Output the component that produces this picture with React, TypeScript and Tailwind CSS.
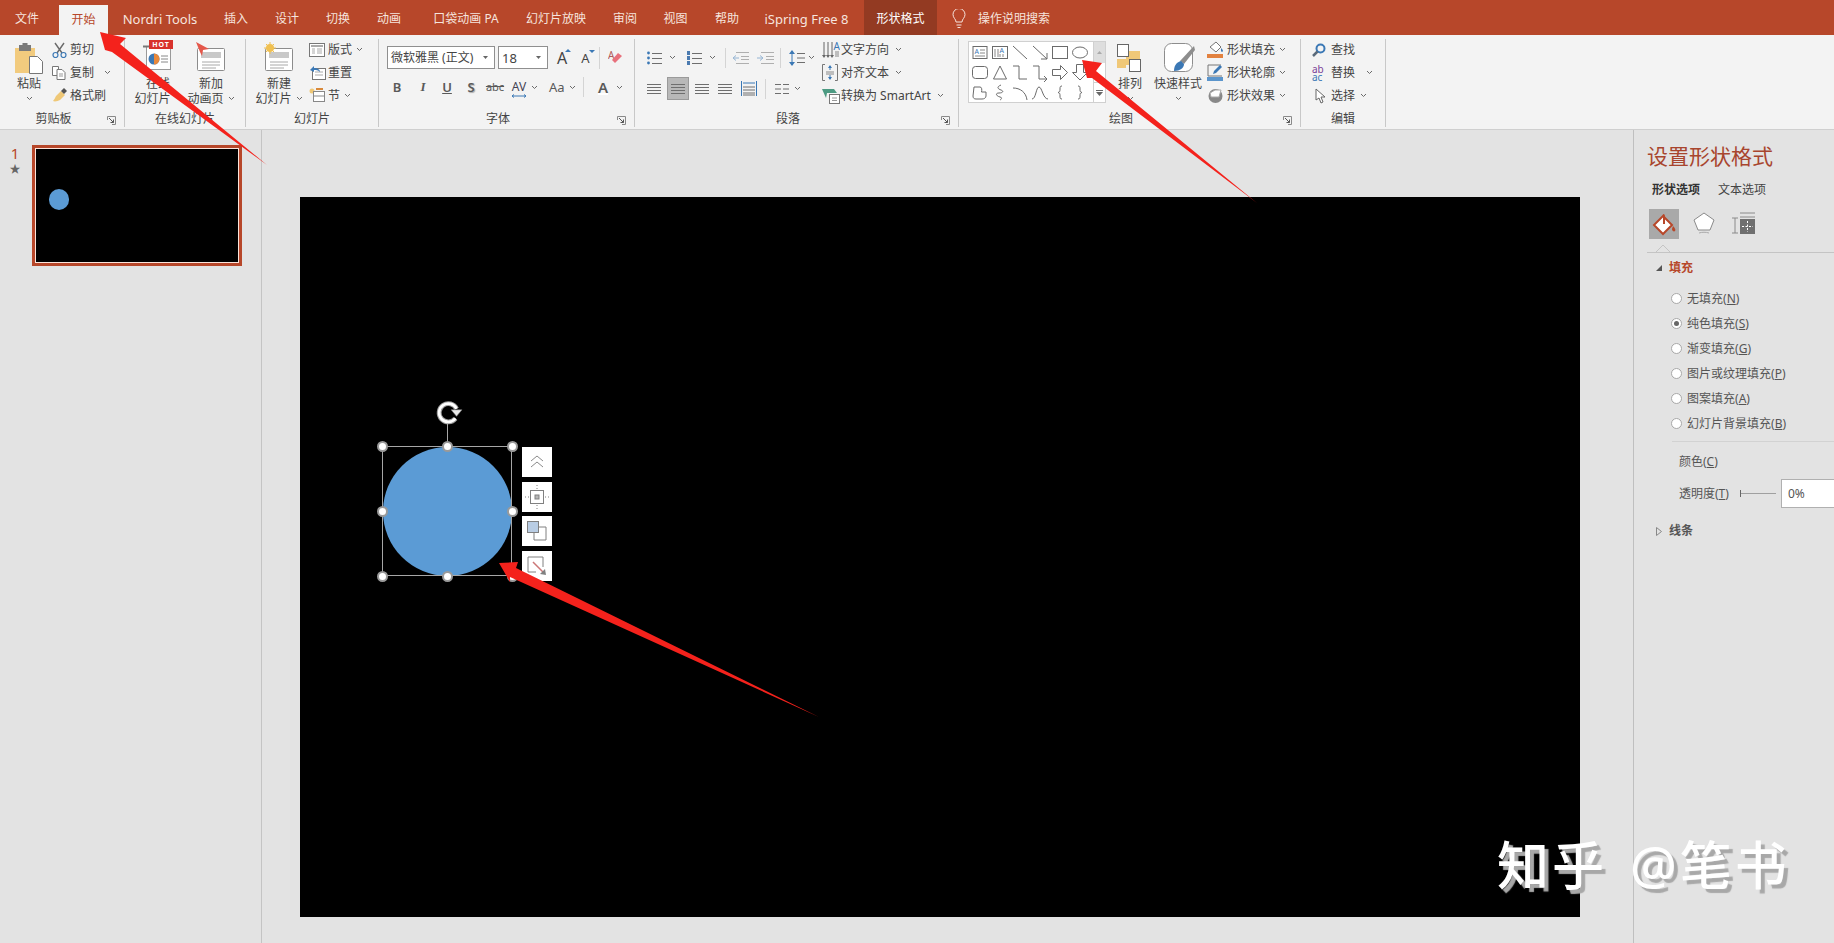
import React from 'react';

const FONT = '[font-family:"Noto_Sans","Noto_Sans_CJK_SC",sans-serif]';

const tabs = [
  { label: '插入', w: 'w-[48px]' },
  { label: '设计', w: 'w-[54px]' },
  { label: '切换', w: 'w-[48px]' },
  { label: '动画', w: 'w-[54px]' },
  { label: '口袋动画 PA', w: 'w-[100px]' },
  { label: '幻灯片放映', w: 'w-[80px]' },
  { label: '审阅', w: 'w-[58px]' },
  { label: '视图', w: 'w-[43px]' },
  { label: '帮助', w: 'w-[60px]' },
];

const fillOptions = ['无填充(N)', '纯色填充(S)', '渐变填充(G)', '图片或纹理填充(P)', '图案填充(A)', '幻灯片背景填充(B)'];

function Chevron({ className = '' }: { className?: string }) {
  return (
    <svg width="7" height="5" viewBox="0 0 7 5" className={`shrink-0 ${className}`}>
      <path d="M1 1l2.5 2.5L6 1" fill="none" stroke="#6a6a6a" strokeWidth="1" />
    </svg>
  );
}

function Launcher() {
  return (
    <svg width="9" height="9" viewBox="0 0 9 9">
      <path d="M.5 4V.5H8.5V8.5H5" fill="none" stroke="#8a8a8a" />
      <path d="M2 2l4.5 4.5M6.5 3.5v3h-3" fill="none" stroke="#555" />
    </svg>
  );
}

function Group({ width, label, launcher, children }: { width: string; label: string; launcher?: boolean; children: React.ReactNode }) {
  return (
    <div className={`flex flex-col shrink-0 ${width}`}>
      <div className="flex h-[70px]">{children}</div>
      <div className="flex h-[22px] items-center pt-[2px]">
        <span className="flex-1 text-center">{label}</span>
        {launcher && (
          <span className="flex w-[17px] pt-[3px]">
            <Launcher />
          </span>
        )}
      </div>
    </div>
  );
}

function Sep() {
  return <div className="mt-[1px] h-[88px] w-px shrink-0 bg-[#c8c8c8]" />;
}

function SmallRow({ icon, slot, label, chevron }: { icon: React.ReactNode; slot: string; label: string; chevron?: string }) {
  return (
    <div className="flex h-[23px] items-center whitespace-nowrap">
      <span className={`flex shrink-0 items-center ${slot}`}>{icon}</span>
      <span>{label}</span>
      {chevron && <Chevron className={chevron} />}
    </div>
  );
}

function LargeButton({ width, icon, lines, chevron }: { width: string; icon: React.ReactNode; lines: string[]; chevron?: 'first' | 'last' }) {
  return (
    <div className={`flex shrink-0 flex-col items-center leading-[15px] ${width}`}>
      <div className="flex h-[38px] w-full items-center justify-center">{icon}</div>
      {lines.map((line, i) => (
        <div key={line} className="flex items-center whitespace-nowrap">
          {line}
          {chevron === 'last' && i === lines.length - 1 && <Chevron className="ml-[4px]" />}
        </div>
      ))}
      {chevron === 'first' && <Chevron className="mt-[5px]" />}
    </div>
  );
}

function SlideIcon({ children }: { children?: React.ReactNode }) {
  return (
    <svg width="30" height="30" viewBox="0 0 30 30">
      <rect x="1.5" y="6.5" width="27" height="22" rx="1" fill="#fff" stroke="#8c8c8c" />
      <rect x="5" y="10" width="20" height="6" fill="#c9c9c9" />
      <path d="M6 20h18M6 23h18M6 26h14" stroke="#a8a8a8" />
      {children}
    </svg>
  );
}

function LinesIcon({ rows, width = 14 }: { rows: number; width?: number }) {
  return (
    <svg width={width} height="14" viewBox={`0 0 ${width} 14`} className="shrink-0">
      {Array.from({ length: rows }).map((_, i) => (
        <path key={i} d={`M0 ${2.5 + (i * 9) / (rows - 1)}h${width}`} stroke="#6e6e6e" />
      ))}
    </svg>
  );
}

function IndentIcon({ out }: { out?: boolean }) {
  return (
    <svg width="17" height="14" viewBox="0 0 17 14" className="shrink-0 opacity-50">
      <path d="M4 1.500h13M9 5.500h8M9 8.500h8M4 12.500h13" stroke="#6e6e6e" />
      {out ? <path d="M7 7H2M4 4.500L1 7l3 2.500" fill="none" stroke="#3b78b5" /> : <path d="M0 7h5M3 4.500L6 7 3 9.500" fill="none" stroke="#3b78b5" />}
    </svg>
  );
}

function BulletIcon({ numbered }: { numbered?: boolean }) {
  return (
    <svg width="15" height="16" viewBox="0 0 15 16" className="shrink-0">
      {[3, 8, 13].map((y) => (
        <g key={y}>
          {numbered ? <rect x="0" y={y - 2} width="3" height="4" fill="#4a7ab0" /> : <circle cx="1.5" cy={y} r="1.4" fill="#3b78b5" />}
          <path d={`M5 ${y + 0.5}h10`} stroke="#6e6e6e" />
        </g>
      ))}
    </svg>
  );
}

function Shape({ children }: { children: React.ReactNode }) {
  return (
    <svg width="20" height="21" viewBox="0 0 20 21" fill="none" stroke="#6b6b6b" strokeWidth="1">
      {children}
    </svg>
  );
}

const shapes = [
  <><rect x="3" y="4.5" width="14" height="12" /><text x="4.5" y="12" fontSize="7" fill="#3b78b5" stroke="none">A</text><path d="M10 8h5M10 11h5M5 14h10" stroke="#888" /></>,
  <><rect x="2.5" y="4.5" width="15" height="12" /><text x="9.5" y="11" fontSize="7" fill="#3b78b5" stroke="none">A</text><path d="M5 7v8M8 7v8M10 12v3M13 12v3" stroke="#888" /></>,
  <path d="M3 4l14 13" />,
  <path d="M3 4l14 13M17 11v6h-6" />,
  <rect x="2.5" y="4.5" width="15" height="12" />,
  <ellipse cx="10" cy="10.5" rx="7.5" ry="5.5" />,
  <rect x="2.5" y="4.5" width="15" height="12" rx="3" />,
  <path d="M10 4l6.5 13h-13z" />,
  <path d="M3 4h6v13h8" />,
  <path d="M3 4h6v13h8M14 14l3 3-3 3" />,
  <path d="M2.5 7.5h8v-4l7 7-7 7v-4h-8z" />,
  <path d="M6.5 2.5v8h-4l7.5 7.5 7.5-7.5h-4v-8z" />,
  <path d="M4 5h6c2 0 2 3 1.500 5H16v4c0 2-2 3-4 3H6c-2 0-3-1-3-3z" />,
  <path d="M11 3c-5 2-3 4 0 5s2 3-2 3-3 3 1 4-1 3 1 3" />,
  <path d="M3 6c7 0 13 4 14 12" />,
  <path d="M2 17c4 0 4-12 7-12s4 12 9 12" />,
  <path d="M12 4c-2 0-2 1-2 3s0 3-2 3.500c2 .5 2 1.500 2 3.500s0 3 2 3" />,
  <path d="M8 4c2 0 2 1 2 3s0 3 2 3.500c-2 .5-2 1.500-2 3.500s0 3-2 3" />,
];

function Ribbon() {
  return (
    <div className="flex h-[95px] shrink-0 border-b border-[#cfcfcf] bg-[#f3f3f3] pt-[3px]">
      <Group width="w-[124px]" label="剪贴板" launcher>
        <div className="ml-[11px] w-[36px]">
          <LargeButton
            width="w-[36px]"
            lines={['粘贴']}
            chevron="first"
            icon={
              <svg width="30" height="32" viewBox="0 0 30 32" className="mt-[4px]">
                <rect x="1" y="5" width="20" height="25" fill="#f2cb7e" />
                <rect x="5" y="2" width="12" height="6" fill="#7a7a7a" />
                <rect x="8.500" y="0" width="5" height="4" fill="#7a7a7a" />
                <path d="M15.500 13.500h8l5 5v12h-13z" fill="#fff" stroke="#777" />
              </svg>
            }
          />
        </div>
        <div className="ml-[5px]">
          <SmallRow slot="w-[18px]" label="剪切" icon={
            <svg width="15" height="16" viewBox="0 0 15 16" fill="none">
              <path d="M3 1l7 10M12 1L5 11" stroke="#6a6a6a" strokeWidth="1.400" />
              <circle cx="3.500" cy="13" r="2.500" stroke="#3b78b5" strokeWidth="1.200" />
              <circle cx="11.500" cy="13" r="2.500" stroke="#3b78b5" strokeWidth="1.200" />
            </svg>
          } />
          <SmallRow slot="w-[18px]" label="复制" chevron="ml-[10px]" icon={
            <svg width="15" height="15" viewBox="0 0 15 15" fill="#fff" stroke="#777">
              <path d="M.5 1.500h6v9h-6z" />
              <path d="M5 4.500h5l3 3v7H5z" />
              <path d="M7 9h4M7 11h4" stroke="#999" />
            </svg>
          } />
          <SmallRow slot="w-[18px]" label="格式刷" icon={
            <svg width="16" height="15" viewBox="0 0 16 15">
              <path d="M9 3l4 4-5 5c-2 1-5 2-7 1 1-1 2-3 3-5z" fill="#efc877" />
              <path d="M10 2l2-2 3 3-2 2 -1 1-3-3z" fill="#555" />
            </svg>
          } />
        </div>
      </Group>
      <Sep />
      <Group width="w-[120px]" label="在线幻灯片">
        <div className="ml-[3px]">
          <LargeButton width="w-[60px]" lines={['在线', '幻灯片']} chevron="last" icon={
            <div className="relative h-[30px] w-[30px]">
              <svg width="30" height="30" viewBox="0 0 30 30">
                <rect x="3.500" y="4.500" width="24" height="23" fill="#fff" stroke="#999" />
                <path d="M0 4.500h8" stroke="#777" strokeWidth="2" />
                <circle cx="11" cy="17" r="5.500" fill="#3b78b5" />
                <path d="M11 17v-5.500a5.500 5.500 0 0 1 0 11z" fill="#e8883a" />
                <path d="M18 14h7M18 17h7M18 20h7" stroke="#888" />
              </svg>
              <span className="absolute left-[6px] top-[-2px] h-[9px] w-[24px] bg-[#d8322c] text-center text-[7px] font-bold leading-[9px] tracking-[1px] text-white">HOT</span>
            </div>
          } />
        </div>
        <LargeButton width="w-[46px]" lines={['新加', '动画页']} chevron="last" icon={
          <SlideIcon>
            <path d="M0 0l13 7-6 1-1 6-2-4z" fill="#e4574a" />
          </SlideIcon>
        } />
      </Group>
      <Sep />
      <Group width="w-[132px]" label="幻灯片">
        <div className="ml-[8px]">
          <LargeButton width="w-[50px]" lines={['新建', '幻灯片']} chevron="last" icon={
            <SlideIcon>
              <circle cx="6" cy="6" r="4" fill="#f0c050" />
              <path d="M6 0v12M0 6h12M2 2l8 8M10 2l-8 8" stroke="#f0c050" />
            </SlideIcon>
          } />
        </div>
        <div className="ml-[5px]">
          <SmallRow slot="w-[19px]" label="版式" chevron="ml-[4px]" icon={
            <svg width="16" height="14" viewBox="0 0 16 14"><rect x=".5" y=".5" width="15" height="13" fill="#fff" stroke="#777" /><path d="M2 3h12" stroke="#aaa" strokeWidth="2" /><path d="M3 6h3M3 8h3M3 10h3M8 6h5M8 8h5M8 10h5" stroke="#aaa" /></svg>
          } />
          <SmallRow slot="w-[19px]" label="重置" icon={
            <svg width="17" height="15" viewBox="0 0 17 15"><rect x="3.500" y="3.500" width="13" height="11" fill="#fff" stroke="#777" /><path d="M6 7h8M6 10h8" stroke="#aaa" /><path d="M1 5l4-4v2c4 0 6 2 6 4-2-2-4-2-6-2v2z" fill="#3b78b5" /></svg>
          } />
          <SmallRow slot="w-[19px]" label="节" chevron="ml-[4px]" icon={
            <svg width="16" height="15" viewBox="0 0 16 15"><circle cx="3" cy="3" r="2.500" fill="#efc877" /><rect x="4.500" y="3.500" width="11" height="10" fill="#fff" stroke="#888" /><path d="M5 8h10" stroke="#888" /><path d="M7 1h7" stroke="#d8883a" strokeWidth="2" /></svg>
          } />
        </div>
      </Group>
      <Sep />
      <Group width="w-[255px]" label="字体" launcher>
        <div className="ml-[8px] pt-[8px]">
          <div className="flex h-[23px] items-center">
            <div className="flex h-[23px] w-[108px] items-center border border-[#8f8f8f] bg-white pl-[3px] whitespace-nowrap">
              <span className="flex-1">微软雅黑 (正文)</span>
              <svg width="5" height="3" viewBox="0 0 5 3" className="mr-[6px]"><path d="M0 0h5L2.500 3z" fill="#666" /></svg>
            </div>
            <div className="ml-[3px] flex h-[23px] w-[50px] items-center border border-[#8f8f8f] bg-white pl-[3px]">
              <span className="flex-1 text-[13px]">18</span>
              <svg width="5" height="3" viewBox="0 0 5 3" className="mr-[6px]"><path d="M0 0h5L2.500 3z" fill="#666" /></svg>
            </div>
            <span className="relative ml-[6px] w-[16px] text-center text-[16px] leading-none">A<i className="absolute right-[-1px] top-[-1px] h-0 w-0 border-x-[3px] border-b-[3px] border-x-transparent border-b-[#3b78b5]" /></span>
            <span className="relative ml-[10px] mt-[2px] w-[11px] text-center text-[13px] leading-none">A<i className="absolute right-[-4px] top-[-2px] h-0 w-0 border-x-[3px] border-t-[3px] border-x-transparent border-t-[#3b78b5]" /></span>
            <div className="ml-[8px] h-[22px] w-px bg-[#d4d4d4]" />
            <svg width="15" height="15" viewBox="0 0 15 15" className="ml-[8px]">
              <text x="0" y="9" fontSize="10" fill="#b05a5a">A</text>
              <path d="M7 13l-3-3 6-7 4 3z" fill="#e8707c" />
            </svg>
          </div>
          <div className="mt-[8px] flex h-[20px] items-center font-semibold text-[#595959]">
            <span className="ml-[-2px] w-[24px] text-center text-[13px]">B</span>
            <span className="ml-[2px] w-[24px] text-center text-[13px] italic [font-family:'Liberation_Serif',serif]">I</span>
            <span className="w-[24px] text-center text-[13px] underline">U</span>
            <span className="w-[24px] text-center text-[13px] [text-shadow:1px_1px_1px_#aaa]">S</span>
            <span className="w-[24px] text-center text-[11px] font-normal line-through">abc</span>
            <span className="relative ml-[4px] w-[16px] text-center text-[12px] font-normal leading-[14px] text-[#445]">
              AV
              <svg width="16" height="4" viewBox="0 0 16 4" className="absolute left-0 top-[14px]"><path d="M1 2h14M3 .5L1 2l2 1.500M13 .5L15 2l-2 1.500" fill="none" stroke="#3b78b5" /></svg>
            </span>
            <Chevron className="ml-[4px]" />
            <span className="ml-[11px] w-[18px] text-[13px] font-normal">Aa</span>
            <Chevron className="ml-[2px]" />
            <div className="ml-[7px] h-[20px] w-px bg-[#d4d4d4]" />
            <span className="ml-[14px] w-[10px] bg-[linear-gradient(transparent_85%,#fff_85%)] text-center text-[15px]">A</span>
            <Chevron className="ml-[8px]" />
          </div>
        </div>
      </Group>
      <Sep />
      <Group width="w-[323px]" label="段落" launcher>
        <div className="w-[187px] shrink-0 pl-[12px] pt-[8px]">
          <div className="flex h-[23px] items-center">
            <BulletIcon />
            <Chevron className="ml-[7px]" />
            <span className="ml-[11px] flex"><BulletIcon numbered /></span>
            <Chevron className="ml-[7px]" />
            <div className="ml-[9px] h-[20px] w-px bg-[#d4d4d4]" />
            <span className="ml-[6px] flex"><IndentIcon out /></span>
            <span className="ml-[8px] flex"><IndentIcon /></span>
            <div className="ml-[6px] h-[20px] w-px bg-[#d4d4d4]" />
            <span className="ml-[8px] flex items-center gap-[2px]">
              <svg width="6" height="16" viewBox="0 0 6 16"><path d="M3 1v14" stroke="#3b78b5" /><path d="M0 4l3-4 3 4zM0 12l3 4 3-4z" fill="#3b78b5" /></svg>
              <LinesIcon rows={3} width={8} />
            </span>
            <Chevron className="ml-[3px]" />
          </div>
          <div className="mt-[8px] flex h-[23px] items-center">
            <LinesIcon rows={4} width={14} />
            <span className="ml-[6px] flex h-[23px] w-[22px] items-center justify-center border border-[#9a9a9a] bg-[#b8b8b8]"><LinesIcon rows={4} width={14} /></span>
            <span className="ml-[6px]"><LinesIcon rows={4} width={14} /></span>
            <span className="ml-[9px]"><LinesIcon rows={4} width={14} /></span>
            <svg width="16" height="17" viewBox="0 0 16 17" className="ml-[9px]">
              <path d="M.5 1v15M15.500 1v15" stroke="#3b78b5" /><path d="M2 3h12" stroke="#3b78b5" /><path d="M2 7h12M2 10h12M2 13h12M2 15h12" stroke="#6e6e6e" />
            </svg>
            <div className="ml-[8px] h-[20px] w-px bg-[#d4d4d4]" />
            <span className="ml-[9px]"><LinesIcon rows={3} width={6} /></span>
            <span className="ml-[2px]"><LinesIcon rows={3} width={6} /></span>
            <Chevron className="ml-[5px]" />
          </div>
        </div>
        <div>
          <SmallRow slot="w-[19px]" label="文字方向" chevron="ml-[6px]" icon={
            <svg width="18" height="18" viewBox="0 0 18 18"><path d="M2 1v14M6 1v14M10 1v14" stroke="#666" /><path d="M0 14l2 3 2-3M4 14l2 3 2-3M8 14l2 3 2-3" fill="#666" /><text x="11.500" y="9" fontSize="10" fill="#3b78b5">A</text><path d="M13 11h4M13 13h4M13 15h4" stroke="#888" /></svg>
          } />
          <SmallRow slot="w-[19px]" label="对齐文本" chevron="ml-[6px]" icon={
            <svg width="16" height="17" viewBox="0 0 16 17" fill="none"><path d="M3 .5H.5v16H3M13 .5h2.500v16H13" stroke="#777" /><path d="M8 2v4M8 11v4" stroke="#3b78b5" /><path d="M6 4l2-3 2 3zM6 13l2 3 2-3z" fill="#3b78b5" /><path d="M4 8h8M4 10h8" stroke="#888" /></svg>
          } />
          <SmallRow slot="w-[19px]" label="转换为 SmartArt" chevron="ml-[6px]" icon={
            <svg width="18" height="16" viewBox="0 0 18 16"><path d="M0 1h12l3 4H5l-1 5z" fill="#4c9a82" /><rect x="7.500" y="6.500" width="10" height="9" fill="#fff" stroke="#777" /><path d="M10 10h5M10 12.500h5" stroke="#999" /></svg>
          } />
        </div>
      </Group>
      <Sep />
      <Group width="w-[341px]" label="绘图" launcher>
        <div className="ml-[9px] mt-[3px] flex h-[62px] w-[138px] shrink-0 border border-[#d0d0d0] bg-white">
          <div className="grid h-[60px] w-[124px] shrink-0 grid-cols-[repeat(6,20px)] grid-rows-[repeat(3,20px)] pl-[1px]">
            {shapes.map((s, i) => (
              <Shape key={i}>{s}</Shape>
            ))}
          </div>
          <div className="flex flex-1 flex-col border-l border-[#d0d0d0]">
            <div className="flex h-[21px] items-center justify-center bg-[#dedede]">
              <svg width="5" height="3" viewBox="0 0 5 3"><path d="M0 3h5L2.500 0z" fill="#aaa" /></svg>
            </div>
            <div className="h-[19px]" />
            <div className="flex h-[20px] flex-col items-center justify-center border-t border-[#d0d0d0]">
              <div className="mb-[1px] h-px w-[7px] bg-[#666]" />
              <svg width="7" height="4" viewBox="0 0 7 4"><path d="M0 0h7L3.500 4z" fill="#666" /></svg>
            </div>
          </div>
        </div>
        <div className="w-[48px] shrink-0">
          <LargeButton width="w-[48px]" lines={['排列']} chevron="first" icon={
            <svg width="24" height="28" viewBox="0 0 24 28" className="mr-[2px] mt-[2px]">
              <rect x="9" y="7" width="14" height="14" fill="#f0c878" />
              <rect x=".5" y=".5" width="11" height="12" fill="#fff" stroke="#666" />
              <rect x="12.500" y="15.500" width="11" height="12" fill="#fff" stroke="#666" />
              <rect x="0" y="15" width="9" height="9" fill="#f0c878" />
            </svg>
          } />
        </div>
        <div className="w-[48px] shrink-0">
          <LargeButton width="w-[48px]" lines={['快速样式']} chevron="first" icon={
            <svg width="34" height="30" viewBox="0 0 34 30">
              <rect x="3.500" y="1.500" width="28" height="28" rx="7" fill="#fff" stroke="#8d8d8d" />
              <path d="M33 4L19 19l4 3L34 8z" fill="#8d8d8d" />
              <path d="M13 29c0-6 3-9 7-10l3 3c0 4-4 7-10 7z" fill="#3b78b5" />
            </svg>
          } />
        </div>
        <div className="ml-[5px]">
          <SmallRow slot="w-[20px]" label="形状填充" chevron="ml-[4px]" icon={
            <svg width="17" height="17" viewBox="0 0 17 17"><path d="M9 1l5 5-5 5-6-5z" fill="#fff" stroke="#777" /><path d="M0 13h16v4H0z" fill="#e2813f" /><path d="M14 7c1 1 2 2 2 3s-2 1-2 0z" fill="#3b78b5" /></svg>
          } />
          <SmallRow slot="w-[20px]" label="形状轮廓" chevron="ml-[4px]" icon={
            <svg width="17" height="17" viewBox="0 0 17 17" fill="none"><path d="M14 1H1v11h14" stroke="#777" /><path d="M0 13h16v4H0z" fill="#5b95cc" /><path d="M6 10l1-3 6-6 2 2-6 6z" fill="#3b78b5" /></svg>
          } />
          <SmallRow slot="w-[20px]" label="形状效果" chevron="ml-[4px]" icon={
            <svg width="17" height="15" viewBox="0 0 17 15"><circle cx="8.500" cy="8" r="7" fill="#888" /><path d="M3 5l5-3h6l-2 7H4z" fill="#fff" stroke="#aaa" /></svg>
          } />
        </div>
      </Group>
      <Sep />
      <Group width="w-[84px]" label="编辑">
        <div className="ml-[11px]">
          <SmallRow slot="w-[19px]" label="查找" icon={
            <svg width="14" height="14" viewBox="0 0 14 14" fill="none"><circle cx="8.500" cy="5.500" r="4" stroke="#3b78b5" strokeWidth="2" /><path d="M5.500 8.500L1 13" stroke="#5a6a7a" strokeWidth="2.500" /></svg>
          } />
          <SmallRow slot="w-[19px]" label="替换" chevron="ml-[11px]" icon={
            <span className="flex flex-col text-[10px] leading-[8px]"><b className="font-normal text-[#7a3f98]">ab</b><b className="font-normal text-[#3b78b5]">ac</b></span>
          } />
          <SmallRow slot="w-[19px]" label="选择" chevron="ml-[5px]" icon={
            <svg width="11" height="16" viewBox="0 0 11 16" className="ml-[3px]"><path d="M1 1v11l3-2 2 5 2-1-2-5h4z" fill="#fff" stroke="#666" /></svg>
          } />
        </div>
      </Group>
      <Sep />
    </div>
  );
}

function Handle({ pos }: { pos: string }) {
  return <div className={`absolute h-[11px] w-[11px] rounded-full border-2 border-[#9a9a9a] bg-white ${pos}`} />;
}

function Slide() {
  return (
    <div className="relative h-[720px] w-[1280px] bg-black">
      <div className="absolute left-[83px] top-[250px] h-[129px] w-[129px] rounded-full bg-[#5b9bd5]" />
      <div className="absolute left-[82px] top-[249px] h-[130px] w-[130px] border border-[#a6a6a6]" />
      <div className="absolute left-[147px] top-[225px] h-[24px] w-px bg-[#a6a6a6]" />
      <svg width="28" height="26" viewBox="0 0 26 24" fill="none" className="absolute left-[135px] top-[202px]">
        <path d="M19 18a8.500 8.500 0 1 1 1-9" stroke="#9e9e9e" strokeWidth="4.500" />
        <path d="M19 18a8.500 8.500 0 1 1 1-9" stroke="#fff" strokeWidth="2.500" />
        <path d="M15 10h10l-5 6z" fill="#e8e8e8" stroke="#888" strokeWidth=".5" />
      </svg>
      <Handle pos="left-[77px] top-[244px]" />
      <Handle pos="left-[142px] top-[244px]" />
      <Handle pos="left-[207px] top-[244px]" />
      <Handle pos="left-[77px] top-[309px]" />
      <Handle pos="left-[207px] top-[309px]" />
      <Handle pos="left-[77px] top-[374px]" />
      <Handle pos="left-[142px] top-[374px]" />
      <Handle pos="left-[207px] top-[374px]" />
      <div className="absolute left-[222px] top-[250px] flex flex-col gap-[4.500px]">
        <div className="flex h-[30px] w-[30px] items-center justify-center bg-white">
          <svg width="14" height="14" viewBox="0 0 14 14" fill="none" stroke="#8a8a8a"><path d="M1 6l6-5 6 5M1 12l6-5 6 5" /></svg>
        </div>
        <div className="flex h-[30px] w-[30px] items-center justify-center bg-white">
          <svg width="24" height="24" viewBox="0 0 24 24" fill="none"><rect x="5.500" y="5.500" width="13" height="13" stroke="#808080" /><rect x="10" y="10" width="4" height="4" fill="#b5b5b5" stroke="#808080" /><path d="M12 0v4M12 20v4M0 12h4M20 12h4" stroke="#808080" strokeDasharray="1 2" /></svg>
        </div>
        <div className="flex h-[30px] w-[30px] items-center justify-center bg-white">
          <svg width="20" height="20" viewBox="0 0 20 20" fill="none"><path d="M12 6h7v13H7v-7" stroke="#808080" /><rect x=".5" y=".5" width="11" height="11" fill="#b9cde4" stroke="#808080" /></svg>
        </div>
        <div className="flex h-[30px] w-[30px] items-center justify-center bg-white">
          <svg width="20" height="20" viewBox="0 0 20 20" fill="none"><path d="M1 1h15v10M1 1v15h8" stroke="#808080" /><path d="M6 6l11 11" stroke="#c77" strokeWidth="1.500" /><path d="M19 19l-6-1 5-5z" fill="#808080" /></svg>
        </div>
      </div>
    </div>
  );
}

function FormatPane() {
  return (
    <div className="w-[201px] shrink-0 overflow-hidden border-l border-[#bfbfbf] text-[#555]">
      <div className="mt-[12px] ml-[13px] h-[28px] whitespace-nowrap text-[21px] leading-[28px] text-[#a8452e]">设置形状格式</div>
      <div className="mt-[11px] ml-[18px] flex h-[18px] items-center leading-[18px]">
        <span className="font-semibold text-[#333]">形状选项</span>
        <span className="ml-[18px] text-[#444]">文本选项</span>
      </div>
      <div className="mt-[10px] ml-[15px] flex items-center">
        <div className="flex h-[30px] w-[30px] items-center justify-center bg-[#a9a9a9]">
          <svg width="26" height="26" viewBox="0 0 26 26">
            <path d="M12 5L3 14l9 9 9-9z" fill="#fff" stroke="#b7472a" strokeWidth="2" />
            <path d="M12 13V3a2 2 0 0 1 2 2v8z" fill="#b7472a" />
            <path d="M22 15c2 2 3 4 2 5s-3 0-3-2z" fill="#b7472a" />
          </svg>
        </div>
        <svg width="22" height="26" viewBox="0 0 22 26" className="ml-[14px]" fill="#fff" stroke="#8a8a8a">
          <path d="M11 2l10 7-4 10H5L1 9z" />
          <path d="M6 22c3-1 7-1 10 0" fill="none" stroke="#aaa" />
        </svg>
        <svg width="24" height="24" viewBox="0 0 24 24" className="ml-[17px]" fill="none">
          <path d="M0 6h6M3 6v15M0 21h6M8 1h15M8 5h15" stroke="#8a8a8a" />
          <rect x="8" y="7" width="15" height="15" fill="#6f6f6f" />
          <path d="M15.500 9v11M10 14.500h11" stroke="#fff" strokeDasharray="2 1.500" />
        </svg>
      </div>
      <div className="relative ml-[13px] mt-[13px] h-px bg-[#c4c4c4]">
        <svg width="14" height="7" viewBox="0 0 14 7" className="absolute left-[9px] top-[-7px]"><path d="M0 7l7-7 7 7" fill="#e3e3e3" stroke="#c4c4c4" /></svg>
      </div>
      <div className="mt-[7px] ml-[22px] flex h-[16px] items-center">
        <svg width="6" height="6" viewBox="0 0 6 6"><path d="M6 0v6H0z" fill="#555" /></svg>
        <span className="ml-[7px] font-semibold text-[#b7472a]">填充</span>
      </div>
      <div className="ml-[37px] mt-[10px] flex flex-col">
        {fillOptions.map((option, i) => {
          const match = option.match(/^(.*)\((.)\)$/)!;
          return (
            <div key={option} className="flex h-[25px] items-center whitespace-nowrap">
              <span className="flex h-[11px] w-[11px] items-center justify-center rounded-full border border-[#a8a8a8] bg-white">
                {i === 1 && <span className="h-[5px] w-[5px] rounded-full bg-[#666]" />}
              </span>
              <span className="ml-[5px]">
                {match[1]}(<span className="underline">{match[2]}</span>)
              </span>
            </div>
          );
        })}
      </div>
      <div className="ml-[38px] mt-[5px] h-px bg-[#d2d2d2]" />
      <div className="ml-[45px] mt-[11px] flex h-[18px] items-center">
        颜色(<span className="underline">C</span>)
      </div>
      <div className="ml-[45px] mt-[8px] flex h-[29px] items-center whitespace-nowrap">
        <span className="w-[61px] shrink-0">透明度(<span className="underline">T</span>)</span>
        <span className="flex w-[36px] shrink-0 items-center">
          <i className="h-[7px] w-px bg-[#666]" />
          <i className="h-px flex-1 bg-[#a0a0a0]" />
        </span>
        <span className="ml-[5px] flex h-[29px] w-[80px] shrink-0 items-center border border-[#b0b0b0] bg-white pl-[6px]">0%</span>
      </div>
      <div className="mt-[15px] ml-[22px] flex h-[16px] items-center">
        <svg width="6" height="9" viewBox="0 0 6 9"><path d="M.5.5l5 4-5 4z" fill="none" stroke="#888" /></svg>
        <span className="ml-[7px] font-semibold text-[#555]">线条</span>
      </div>
    </div>
  );
}

export default function App() {
  return (
    <div className={`relative flex h-[943px] w-[1834px] flex-col overflow-hidden bg-[#e3e3e3] text-[12px] leading-[16px] text-[#444] ${FONT}`}>
      <div className="flex h-[35px] shrink-0 items-end bg-[#b7472a] pl-[3px] text-[#f6e4de]">
        <div className="flex h-[35px] w-[48px] items-center justify-center pt-[2px]">文件</div>
        <div className="ml-[8px] flex h-[30px] w-[49px] items-center justify-center bg-[#f3f3f3] text-[#b7472a]">开始</div>
        <div className="flex h-[35px] w-[104px] items-center justify-center pt-[2px] text-[13px]">Nordri Tools</div>
        {tabs.map((tab) => (
          <div key={tab.label} className={`flex h-[35px] items-center justify-center pt-[2px] whitespace-nowrap ${tab.w}`}>{tab.label}</div>
        ))}
        <div className="flex h-[35px] w-[99px] items-center justify-center pt-[2px] text-[13px] whitespace-nowrap">iSpring Free 8</div>
        <div className="ml-[8px] flex h-[35px] w-[73px] items-center justify-center bg-[#933a22] pt-[2px] text-white">形状格式</div>
        <div className="flex h-[35px] items-center pt-[2px]">
          <svg width="14" height="20" viewBox="0 0 14 20" fill="none" stroke="#f6e4de" className="ml-[15px]">
            <path d="M4 13c0-3-3-4-3-7.500a6 6 0 0 1 12 0C13 9 10 10 10 13zM4.500 16h5M5.500 18.500h3" />
          </svg>
          <span className="ml-[12px]">操作说明搜索</span>
        </div>
      </div>
      <Ribbon />
      <div className="flex min-h-0 flex-1">
        <div className="flex w-[262px] shrink-0 border-r border-[#c4c4c4] pl-[4px] pt-[15px]">
          <div className="w-[22px] text-center leading-[16px]">
            <div className="text-[15px] text-[#b7472a]">1</div>
            <div className="text-[11px] text-[#666]">★</div>
          </div>
          <div className="ml-[6px] h-[121px] w-[210px] border-[3px] border-[#b7472a] bg-black pl-[14px] pt-[41px] outline outline-1 -outline-offset-4 outline-[#fbe5dc]">
            <div className="h-[21px] w-[20px] rounded-full bg-[#5b9bd5]" />
          </div>
        </div>
        <div className="min-w-0 flex-1 pl-[38px] pt-[67px]">
          <Slide />
        </div>
        <FormatPane />
      </div>
      <div className="absolute left-[1497px] top-[826px] flex whitespace-nowrap text-[52px] font-medium leading-[78px] tracking-[3px] text-white [text-shadow:4px_4px_1px_#a8a8a8]">
        <span>知乎</span>
        <span className="ml-[23px]">@笔书</span>
      </div>
      <svg width="1834" height="943" viewBox="0 0 1834 943" className="pointer-events-none absolute left-0 top-0">
        <polygon points="100,32 126,38 120,44 267,165 112,52 105,50" fill="#f4221c" />
        <polygon points="1082,60 1102,63 1096,71 1257,203 1092,78 1087,78" fill="#f4221c" />
        <polygon points="499,563 518,562 516,568 819,717 510,577 510,582" fill="#f4221c" />
      </svg>
    </div>
  );
}
